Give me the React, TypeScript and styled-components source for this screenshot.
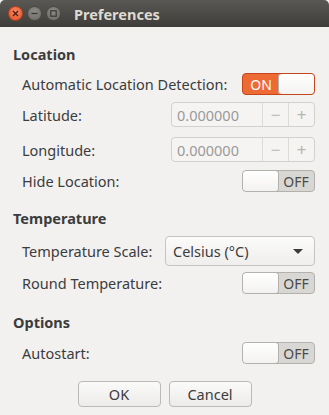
import React from 'react';
import styled, { createGlobalStyle } from 'styled-components';

const GlobalStyle = createGlobalStyle`
  html, body {
    margin: 0;
    padding: 0;
    background: #f2f1f0;
  }
  body {
    font-family: 'Noto Sans', 'Open Sans', sans-serif;
  }
`;

const Window = styled.div`
  width: 329px;
  height: 415px;
  background: #f2f1f0;
  overflow: hidden;
  color: #3c3c3c;
  font-size: 14.5px;
`;

const TitleBar = styled.div`
  height: 27px;
  display: flex;
  align-items: center;
  padding-left: 8px;
  background: linear-gradient(#595854, #3e3d39);
  border-radius: 5px 5px 0 0;
`;

const WinButton = styled.div<{ $kind: 'close' | 'other' }>`
  width: 15px;
  height: 15px;
  border-radius: 50%;
  margin-right: 4px;
  display: flex;
  align-items: center;
  justify-content: center;
  box-sizing: border-box;
  background: ${(p) =>
    p.$kind === 'close'
      ? 'radial-gradient(circle at 50% 35%, #f88560, #e4522a)'
      : 'radial-gradient(circle at 50% 35%, #8c8b86, #6b6a65)'};
  border: 1px solid ${(p) => (p.$kind === 'close' ? '#b2421c' : '#4a4945')};
`;

const Title = styled.div`
  margin-left: 9px;
  color: #dfdbd2;
  font-weight: bold;
  font-size: 14.5px;
`;

const Content = styled.div`
  padding: 17px 14px 0 13px;
  display: flex;
  flex-direction: column;
`;

const SectionHeader = styled.div<{ $top: number }>`
  height: 20px;
  line-height: 20px;
  font-weight: bold;
  margin-top: ${(p) => p.$top}px;
`;

const Row = styled.div<{ $top: number; $height: number }>`
  display: flex;
  align-items: center;
  justify-content: space-between;
  height: ${(p) => p.$height}px;
  margin-top: ${(p) => p.$top}px;
  padding-left: 9px;
`;

const Label = styled.span``;

const SwitchBox = styled.div<{ $on: boolean }>`
  width: 73px;
  height: 22px;
  box-sizing: border-box;
  border-radius: 4px;
  border: 1px solid ${(p) => (p.$on ? '#c2461a' : '#b3b1ad')};
  background: ${(p) => (p.$on ? '#ee6a35' : '#d8d7d3')};
  display: flex;
  flex-direction: ${(p) => (p.$on ? 'row' : 'row-reverse')};
  align-items: stretch;
  overflow: hidden;
`;

const SwitchText = styled.div<{ $on: boolean }>`
  flex: 1;
  display: flex;
  align-items: center;
  justify-content: center;
  font-size: 14px;
  color: ${(p) => (p.$on ? '#ffffff' : '#4a4a4a')};
`;

const Knob = styled.div`
  width: 35px;
  background: linear-gradient(#ffffff, #f3f2f0);
  border-radius: 3px;
  box-shadow: 0 0 0 1px #b3b1ad;
`;

const Toggle = ({ on }: { on: boolean }) => (
  <SwitchBox $on={on}>
    <SwitchText $on={on}>{on ? 'ON' : 'OFF'}</SwitchText>
    <Knob />
  </SwitchBox>
);

const SpinBox = styled.div`
  width: 144px;
  height: 25px;
  box-sizing: border-box;
  border: 1px solid #d3d1cd;
  border-radius: 4px;
  background: #f5f4f3;
  display: flex;
  align-items: stretch;
`;

const SpinValue = styled.div`
  flex: 1;
  display: flex;
  align-items: center;
  padding-left: 5px;
  color: #9a9a98;
`;

const SpinButton = styled.div`
  width: 25px;
  border-left: 1px solid #dddbd8;
  display: flex;
  align-items: center;
  justify-content: center;
  color: #b5b4b1;
  font-size: 17px;
`;

const Combo = styled.div`
  width: 150px;
  height: 30px;
  box-sizing: border-box;
  border: 1px solid #c6c4c0;
  border-radius: 4px;
  background: linear-gradient(#fbfbfa, #efeeec);
  display: flex;
  align-items: center;
  justify-content: space-between;
  padding: 0 11px 0 7px;
`;

const Arrow = styled.div`
  width: 0;
  height: 0;
  border-left: 5px solid transparent;
  border-right: 5px solid transparent;
  border-top: 5px solid #3c3c3c;
`;

const ButtonRow = styled.div`
  display: flex;
  justify-content: center;
  gap: 8px;
  margin-top: 17px;
  padding-left: 1px;
`;

const Button = styled.button`
  width: 83px;
  height: 26px;
  box-sizing: border-box;
  border: 1px solid #bcbab5;
  border-radius: 4px;
  background: linear-gradient(#fafaf9, #ecebe9);
  font-family: inherit;
  font-size: 14.5px;
  color: #3c3c3c;
  padding: 0;
`;

export default function App() {
  return (
    <>
      <GlobalStyle />
      <Window>
        <TitleBar>
          <WinButton $kind="close">
            <svg width="7" height="7" viewBox="0 0 7 7">
              <path d="M1 1L6 6M6 1L1 6" stroke="#4a2010" strokeWidth="1.3" />
            </svg>
          </WinButton>
          <WinButton $kind="other">
            <svg width="7" height="7" viewBox="0 0 7 7">
              <path d="M0.5 3.5H6.5" stroke="#3a3935" strokeWidth="1.3" />
            </svg>
          </WinButton>
          <WinButton $kind="other">
            <svg width="7" height="7" viewBox="0 0 7 7">
              <rect x="0.8" y="0.8" width="5.4" height="5.4" fill="none" stroke="#3a3935" strokeWidth="1.2" />
            </svg>
          </WinButton>
          <Title>Preferences</Title>
        </TitleBar>
        <Content>
          <SectionHeader $top={0}>Location</SectionHeader>
          <Row $top={9} $height={22}>
            <Label>Automatic Location Detection:</Label>
            <Toggle on />
          </Row>
          <Row $top={7} $height={25}>
            <Label>Latitude:</Label>
            <SpinBox>
              <SpinValue>0.000000</SpinValue>
              <SpinButton>−</SpinButton>
              <SpinButton>+</SpinButton>
            </SpinBox>
          </Row>
          <Row $top={10} $height={25}>
            <Label>Longitude:</Label>
            <SpinBox>
              <SpinValue>0.000000</SpinValue>
              <SpinButton>−</SpinButton>
              <SpinButton>+</SpinButton>
            </SpinBox>
          </Row>
          <Row $top={8} $height={22}>
            <Label>Hide Location:</Label>
            <Toggle on={false} />
          </Row>
          <SectionHeader $top={16}>Temperature</SectionHeader>
          <Row $top={8} $height={30}>
            <Label>Temperature Scale:</Label>
            <Combo>
              <span>Celsius (°C)</span>
              <Arrow />
            </Combo>
          </Row>
          <Row $top={6} $height={22}>
            <Label>Round Temperature:</Label>
            <Toggle on={false} />
          </Row>
          <SectionHeader $top={18}>Options</SectionHeader>
          <Row $top={10} $height={22}>
            <Label>Autostart:</Label>
            <Toggle on={false} />
          </Row>
          <ButtonRow>
            <Button>OK</Button>
            <Button>Cancel</Button>
          </ButtonRow>
        </Content>
      </Window>
    </>
  );
}
